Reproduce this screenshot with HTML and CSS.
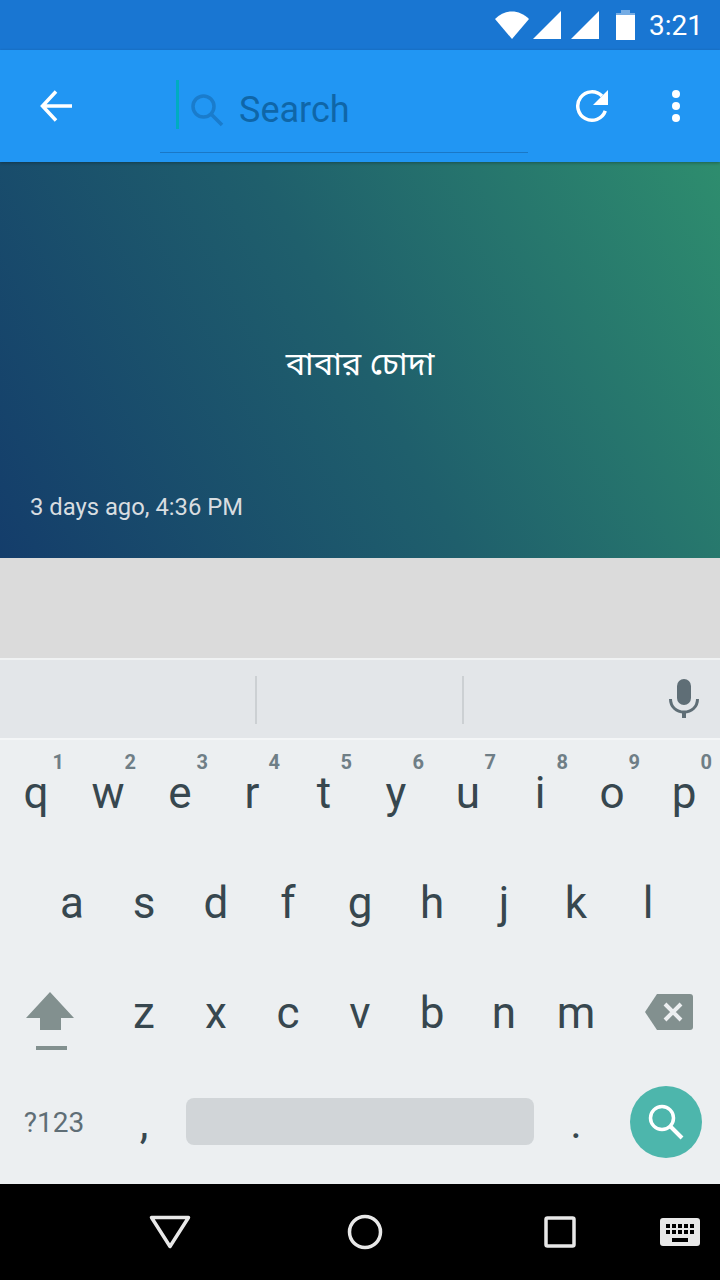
FILE: index.html
```html
<!DOCTYPE html>
<html lang="en">
<head>
    <meta charset="UTF-8">
    <meta name="viewport" content="width=device-width, initial-scale=1.0">
    <title>Search</title>
    <link rel="stylesheet" href="styles.css">
</head>
<body>
    <div class="statusbar">
        <svg class="status-wifi" width="34" height="28" viewBox="0 0 34 28"><path d="M0 8C5 3 11 .5 17 .5S29 3 34 8L17 28z" fill="#fff"/></svg>
        <svg class="status-signal" width="30" height="30" viewBox="0 0 30 30"><path d="M29 1v28H1z" fill="#fff"/></svg>
        <svg class="status-signal" width="30" height="30" viewBox="0 0 30 30"><path d="M29 1v28H1z" fill="#fff"/></svg>
        <svg class="status-battery" width="19" height="30" viewBox="0 0 19 30"><path d="M5 0h9v3h5v5H0V3h5z" fill="#fff" opacity="0.4"/><path d="M0 5h19v25H0z" fill="#fff"/></svg>
        <span class="status-time">3:21</span>
    </div>

    <div class="toolbar">
        <svg class="back-icon" width="32" height="32" viewBox="0 0 32 32"><path d="M16 1.500 2.500 16 16 30.500M3 16h29" fill="none" stroke="#fff" stroke-width="3.500"/></svg>
        <div class="searchbox">
            <span class="cursor"></span>
            <svg class="search-icon" width="34" height="34" viewBox="0 0 34 34"><circle cx="13.500" cy="13.500" r="10.500" fill="none" stroke="#1a7ccc" stroke-width="3.500"/><path d="m21 21 11 11" stroke="#1a7ccc" stroke-width="3.500"/></svg>
            <span class="search-hint">Search</span>
        </div>
        <svg class="refresh-icon" width="34" height="34" viewBox="0 0 34 34"><path d="M30.300 21.900A14.200 14.200 0 1 1 27 7" fill="none" stroke="#fff" stroke-width="3.500"/><path d="M33 1v15H18z" fill="#fff"/></svg>
        <div class="dots"><span></span><span></span><span></span></div>
    </div>

    <div class="card">
        <p class="card-title">বাবার চোদা</p>
        <p class="card-date">3 days ago, 4:36 PM</p>
    </div>

    <div class="band"></div>

    <div class="suggestions">
        <div class="slot slot-first"></div>
        <div class="slot slot-second"></div>
        <div class="slot-mic">
            <svg width="30" height="40" viewBox="0 0 30 40"><rect x="8" y="0" width="14" height="26" rx="7" fill="#5f6e76"/><path d="M1.500 20c0 8 6 13 13.500 13s13.500-5 13.500-13" fill="none" stroke="#5f6e76" stroke-width="3"/><path d="M15 32v7" stroke="#5f6e76" stroke-width="4"/></svg>
        </div>
    </div>

    <div class="keyboard">
        <div class="row">
            <div class="key"><sup>1</sup>q</div>
            <div class="key"><sup>2</sup>w</div>
            <div class="key"><sup>3</sup>e</div>
            <div class="key"><sup>4</sup>r</div>
            <div class="key"><sup>5</sup>t</div>
            <div class="key"><sup>6</sup>y</div>
            <div class="key"><sup>7</sup>u</div>
            <div class="key"><sup>8</sup>i</div>
            <div class="key"><sup>9</sup>o</div>
            <div class="key"><sup>0</sup>p</div>
        </div>
        <div class="row">
            <div class="key">a</div>
            <div class="key">s</div>
            <div class="key">d</div>
            <div class="key">f</div>
            <div class="key">g</div>
            <div class="key">h</div>
            <div class="key">j</div>
            <div class="key">k</div>
            <div class="key">l</div>
        </div>
        <div class="row">
            <div class="key key-wide key-shift">
                <svg width="48" height="60" viewBox="0 0 48 60"><path d="M24 0 48 26H35v12H14V26H0z" fill="#82908f"/><path d="M10 56h31" stroke="#82908f" stroke-width="4"/></svg>
            </div>
            <div class="key">z</div>
            <div class="key">x</div>
            <div class="key">c</div>
            <div class="key">v</div>
            <div class="key">b</div>
            <div class="key">n</div>
            <div class="key">m</div>
            <div class="key key-wide key-del">
                <svg width="48" height="36" viewBox="0 0 48 36"><path d="M12 0h33a3 3 0 0 1 3 3v30a3 3 0 0 1-3 3H12L0 18z" fill="#82908f"/><path d="m20 10 16 16M36 10 20 26" stroke="#eceff1" stroke-width="4"/></svg>
            </div>
        </div>
        <div class="row row-bottom">
            <div class="key key-wide key-symbols">?123</div>
            <div class="key key-punct">,</div>
            <div class="spacebar"></div>
            <div class="key key-punct">.</div>
            <div class="key key-wide key-action">
                <div class="action-btn">
                    <svg width="36" height="36" viewBox="0 0 36 36"><circle cx="14" cy="14" r="11.500" fill="none" stroke="#fff" stroke-width="3.500"/><path d="m22 22 12 12" stroke="#fff" stroke-width="4"/></svg>
                </div>
            </div>
        </div>
    </div>

    <div class="navbar">
        <svg class="nav-back" width="42" height="34" viewBox="0 0 42 34"><path d="M2.500 2.500h37L21 31.500z" fill="none" stroke="#e8e8e8" stroke-width="3.500" stroke-linejoin="round"/></svg>
        <svg class="nav-home" width="36" height="36" viewBox="0 0 36 36"><circle cx="18" cy="18" r="15.500" fill="none" stroke="#e8e8e8" stroke-width="3.500"/></svg>
        <svg class="nav-recent" width="32" height="32" viewBox="0 0 32 32"><rect x="2" y="2" width="28" height="28" rx="1.500" fill="none" stroke="#e8e8e8" stroke-width="3.500"/></svg>
        <svg class="nav-keyboard" width="40" height="28" viewBox="0 0 40 28"><rect width="40" height="28" rx="3" fill="#e8e8e8"/><path d="M6 6h4v4H6zm6 0h4v4h-4zm6 0h4v4h-4zm6 0h4v4h-4zm6 0h4v4h-4zM6 12h4v4H6zm6 0h4v4h-4zm6 0h4v4h-4zm6 0h4v4h-4zm6 0h4v4h-4zM12 20h16v4H12z" fill="#000"/></svg>
    </div>
</body>
</html>
```

FILE: styles.css
```css
* {
    margin: 0;
    padding: 0;
    box-sizing: border-box;
}

body {
    width: 720px;
    height: 1280px;
    overflow: hidden;
    font-family: Roboto, "Noto Sans", sans-serif;
    display: flex;
    flex-direction: column;
    background-color: #eceff1;
}

.statusbar {
    height: 50px;
    background-color: #1976d2;
    display: flex;
    align-items: center;
    justify-content: flex-end;
    padding-right: 17px;
}

.status-wifi {
    margin-right: 3px;
}

.status-signal {
    margin-right: 8px;
}

.status-battery {
    margin-left: 8px;
    margin-right: 14px;
}

.status-time {
    font-size: 28px;
    color: #fff;
}

.toolbar {
    height: 112px;
    background-color: #2196f3;
    display: flex;
    align-items: flex-start;
    position: relative;
    z-index: 1;
    box-shadow: 0 1px 3px rgba(0, 0, 0, 0.3);
}

.back-icon {
    margin: 40px 0 0 40px;
}

.searchbox {
    width: 368px;
    height: 103px;
    margin-left: 88px;
    padding: 30px 0 0 16px;
    border-bottom: 1px solid #1a78c6;
    display: flex;
    align-items: flex-start;
}

.cursor {
    width: 3px;
    height: 49px;
    background-color: #00acc1;
}

.search-icon {
    margin: 13px 0 0 11px;
}

.search-hint {
    margin: 9px 0 0 15px;
    font-size: 36px;
    line-height: 42px;
    color: #0f66a8;
}

.refresh-icon {
    margin: 39px 0 0 47px;
}

.dots {
    margin: 40px 0 0 63px;
    display: flex;
    flex-direction: column;
    gap: 4px;
}

.dots span {
    width: 8px;
    height: 8px;
    border-radius: 50%;
    background-color: #fff;
}

.card {
    height: 396px;
    background: linear-gradient(62deg, #143d6b 0%, #1f5f6c 50%, #2e8d6e 100%);
    display: flex;
    flex-direction: column;
    padding: 0 30px;
    color: #fff;
}

.card-title {
    margin-top: 184px;
    text-align: center;
    font-size: 32.600px;
    line-height: 42px;
    font-family: "Noto Sans Bengali", "Noto Sans", sans-serif;
}

.card-date {
    margin-top: 103px;
    font-size: 23.800px;
    line-height: 32px;
    color: #d8dde0;
}

.band {
    height: 100px;
    background-color: #dbdbdb;
}

.suggestions {
    height: 82px;
    background-color: #e3e6e9;
    border-top: 2px solid #f0f2f3;
    border-bottom: 2px solid #f4f6f7;
    display: flex;
    align-items: center;
}

.slot {
    height: 48px;
    margin-top: 2px;
    border-right: 2px solid #ccd0d3;
}

.slot-first {
    width: 257px;
}

.slot-second {
    width: 207px;
}

.slot-mic {
    flex: 1;
    padding-right: 21px;
    display: flex;
    justify-content: flex-end;
    align-items: center;
}

.keyboard {
    flex: 1;
    display: flex;
    flex-direction: column;
    background-color: #eceff1;
    color: #37474f;
}

.row {
    height: 110px;
    display: flex;
    justify-content: center;
}

.row-bottom {
    height: 114px;
    margin-top: -1px;
}

.key {
    width: 72px;
    display: flex;
    align-items: center;
    justify-content: center;
    position: relative;
    font-size: 44px;
    padding-bottom: 4px;
}

.key sup {
    position: absolute;
    top: 11px;
    right: 8px;
    font-size: 20px;
    line-height: 22px;
    font-weight: 700;
    color: #6f7e86;
}

.key-wide {
    width: 108px;
}

.key-shift {
    padding: 0 8px 0 0;
    align-self: flex-start;
    margin-top: 32px;
}

.key-del {
    padding: 0 0 6px 6px;
}

.key-symbols {
    font-size: 28px;
    color: #5f6e76;
    padding: 0 0 8px;
}

.key-punct {
    padding-bottom: 6px;
}

.key-action {
    padding-bottom: 8px;
}

.spacebar {
    width: 348px;
    height: 47px;
    margin: 29px 6px 0;
    background-color: #d1d5d8;
    border-radius: 8px;
}

.action-btn {
    width: 72px;
    height: 72px;
    border-radius: 50%;
    background-color: #4db6ac;
    display: flex;
    align-items: center;
    justify-content: center;
}

.navbar {
    height: 96px;
    background-color: #000;
    position: relative;
    display: flex;
    align-items: center;
}

.nav-back {
    margin-left: 149px;
}

.nav-home {
    margin-left: 156px;
}

.nav-recent {
    margin-left: 161px;
}

.nav-keyboard {
    margin-left: 84px;
}
```
